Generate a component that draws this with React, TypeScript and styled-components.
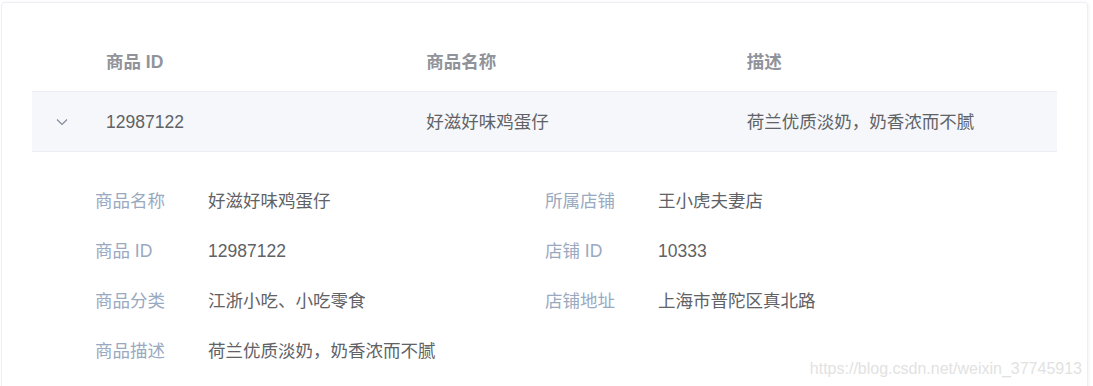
import styled, { createGlobalStyle } from 'styled-components';

const GlobalStyle = createGlobalStyle`
  body {
    margin: 0;
    background: #fff;
    font-family: "Liberation Sans", "Noto Sans CJK SC", sans-serif;
  }
`;

interface IProduct {
  id: string;
  name: string;
  category: string;
  desc: string;
  shop: string;
  shopId: string;
  address: string;
}

const product: IProduct = {
  id: '12987122',
  name: '好滋好味鸡蛋仔',
  category: '江浙小吃、小吃零食',
  desc: '荷兰优质淡奶，奶香浓而不腻',
  shop: '王小虎夫妻店',
  shopId: '10333',
  address: '上海市普陀区真北路',
};

const Card = styled.div`
  position: relative;
  margin: 2px 0 0 1px;
  width: 1087px;
  height: 400px;
  box-sizing: border-box;
  border: 1px solid #ebeef5;
  border-radius: 4px;
  box-shadow: 1px 0 3px rgba(0, 0, 0, 0.05);
  padding: 29px 30px 0 30px;
  overflow: hidden;
`;

const Table = styled.div`
  width: 1025px;
  font-size: 17.5px;
`;

const Row = styled.div<{ $head?: boolean; $hover?: boolean }>`
  display: grid;
  grid-template-columns: 64px 1fr 1fr 1fr;
  align-items: center;
  height: 59px;
  border-bottom: 1px solid #ebeef5;
  background: ${(p) => (p.$hover ? '#f5f7fa' : '#fff')};
  color: ${(p) => (p.$head ? '#909399' : '#606266')};
  font-weight: ${(p) => (p.$head ? 700 : 400)};
`;

const Cell = styled.div`
  padding-left: 10px;
  line-height: 24px;
`;

const ExpandCell = styled.div`
  display: flex;
  justify-content: center;
  padding-right: 4px;
`;

const Expanded = styled.div`
  display: grid;
  grid-template-columns: 450px 1fr;
  grid-auto-rows: 50px;
  padding: 24px 50px 0 63px;
`;

const Item = styled.div`
  display: flex;
  align-items: baseline;
  line-height: 50px;
  font-size: 17.5px;
`;

const Label = styled.span`
  width: 113px;
  color: #99a9bf;
`;

const Value = styled.span`
  color: #606266;
`;

const Watermark = styled.div`
  position: absolute;
  right: 5px;
  bottom: 23px;
  font-size: 16px;
  color: #e2e2e2;
  font-family: "Liberation Sans", sans-serif;
`;

const Chevron = () => (
  <svg width="12" height="8" viewBox="0 0 12 8">
    <path d="M1 1.5 L6 6.5 L11 1.5" fill="none" stroke="#7f8896" strokeWidth="1.1" />
  </svg>
);

export default function App() {
  const fields: [string, string][] = [
    ['商品名称', product.name],
    ['所属店铺', product.shop],
    ['商品 ID', product.id],
    ['店铺 ID', product.shopId],
    ['商品分类', product.category],
    ['店铺地址', product.address],
    ['商品描述', product.desc],
  ];

  return (
    <>
      <GlobalStyle />
      <Card>
        <Table>
          <Row $head>
            <div />
            <Cell>商品 ID</Cell>
            <Cell>商品名称</Cell>
            <Cell>描述</Cell>
          </Row>
          <Row $hover>
            <ExpandCell>
              <Chevron />
            </ExpandCell>
            <Cell>{product.id}</Cell>
            <Cell>{product.name}</Cell>
            <Cell>{product.desc}</Cell>
          </Row>
          <Expanded>
            {fields.map(([label, value]) => (
              <Item key={label}>
                <Label>{label}</Label>
                <Value>{value}</Value>
              </Item>
            ))}
          </Expanded>
        </Table>
        <Watermark>https://blog.csdn.net/weixin_37745913</Watermark>
      </Card>
    </>
  );
}
